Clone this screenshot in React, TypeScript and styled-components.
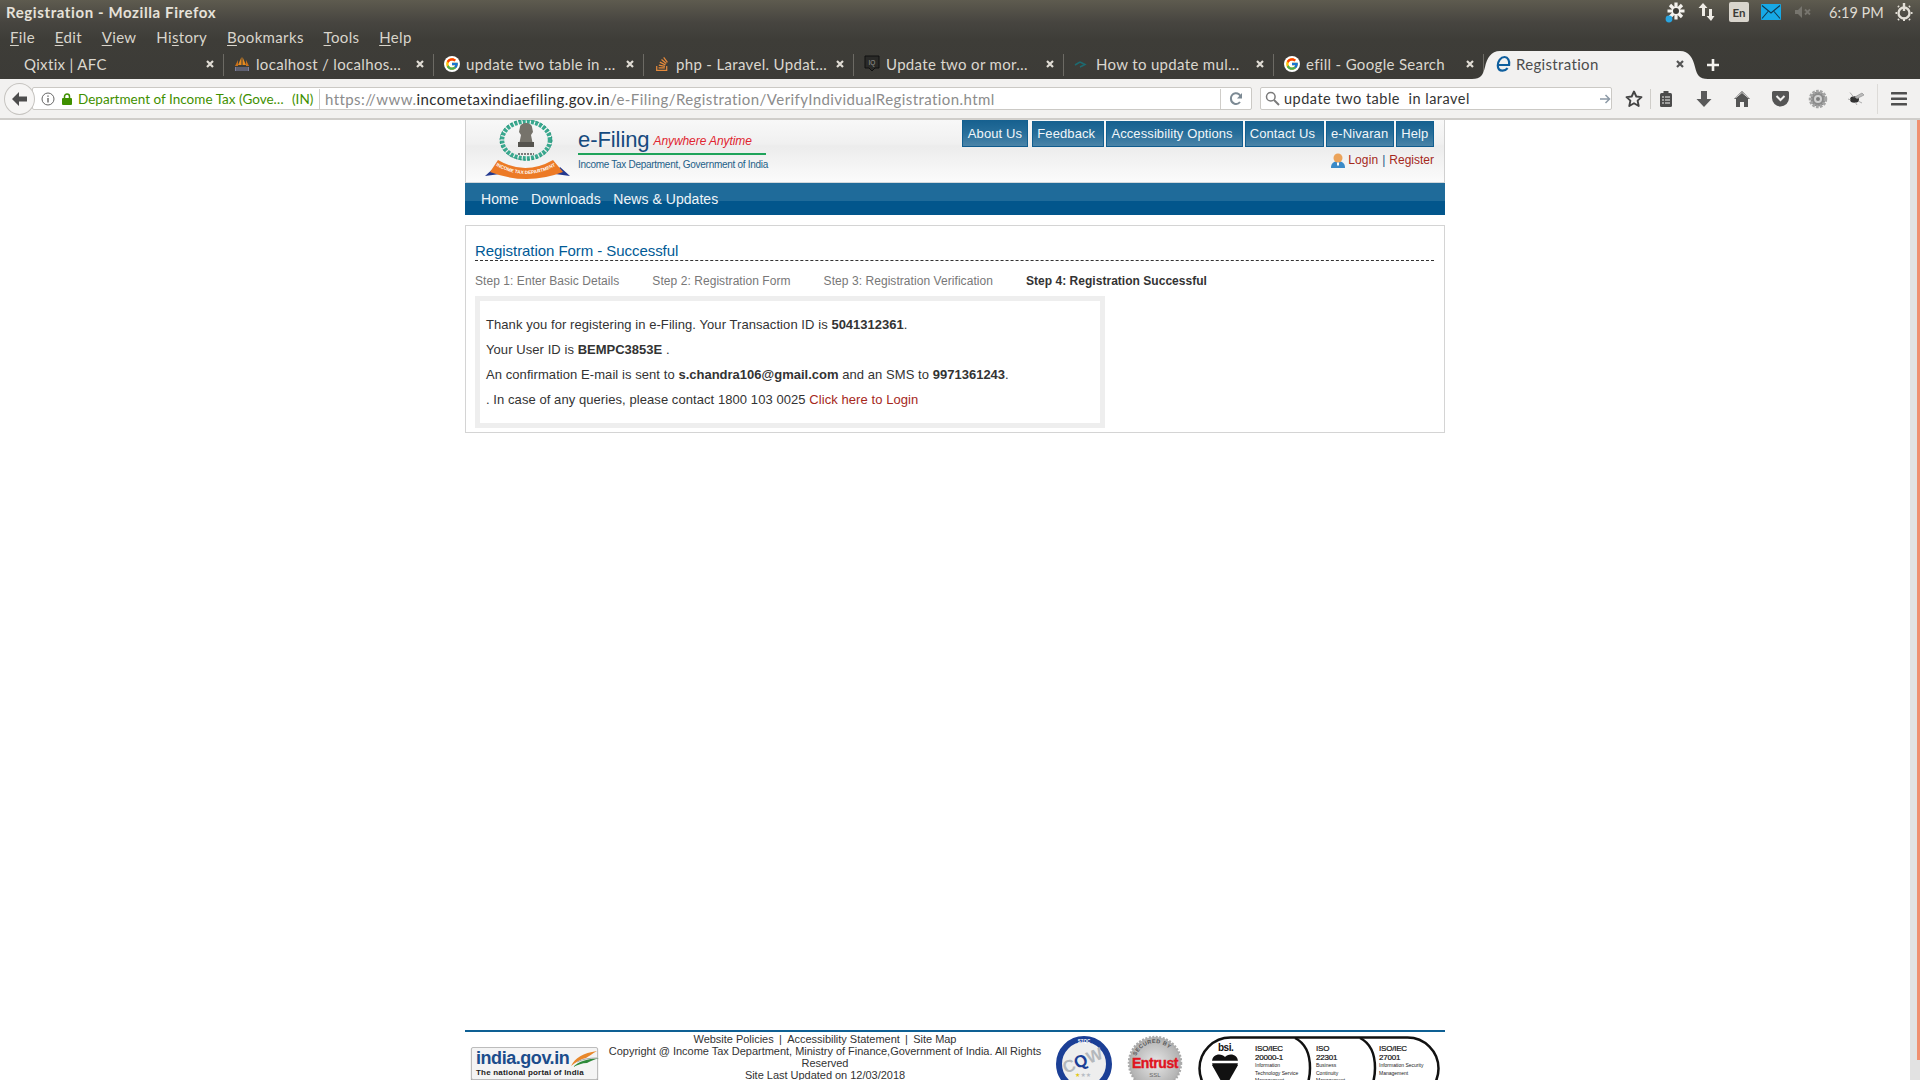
import React from 'react';
import styled, { createGlobalStyle } from 'styled-components';
import { FcGoogle } from 'react-icons/fc';
import { FaStackOverflow } from 'react-icons/fa';

const Global = createGlobalStyle`
  html, body { margin: 0; padding: 0; background: #fff; overflow: hidden; }
  * { box-sizing: border-box; }
`;

const UI = `"Lato", "Noto Sans", sans-serif`;
const WEB = `"Liberation Sans", Arial, sans-serif`;

const Screen = styled.div`
  width: 1920px; height: 1080px; overflow: hidden; display: flex; flex-direction: column;
  font-family: ${UI}; background: #fff;
`;
const TopChrome = styled.div`
  background: linear-gradient(180deg, #5e5b4f 0, #474540 22px, #3e3d38 40px, #3c3b37 100%);
  height: 79px; display: flex; flex-direction: column;
`;
const TitleBar = styled.div`
  height: 24px; display: flex; align-items: center; justify-content: space-between; padding-left: 6px; color: #e6e2da;
`;
const WindowTitle = styled.div`
  font: 700 15px ${UI}; letter-spacing: 0.6px;
`;
const Tray = styled.div`
  display: flex; align-items: center; padding-right: 1px; height: 24px;
`;
const TraySlot = styled.div<{ $w?: number }>`
  width: ${p => p.$w ?? 32}px; display: flex; justify-content: center; align-items: center; height: 24px;
`;
const Clock = styled.div`
  width: 60px; margin-left: 10px; font: 400 14.5px ${UI}; color: #dfdbd2; white-space: nowrap;
`;
const Lang = styled.div`
  width: 20px; height: 20px; background: #d9d5cd; border-radius: 2px; color: #3c3b37; font: 700 11.5px ${UI};
  display: flex; align-items: center; justify-content: center;
`;
const MenuBar = styled.div`
  height: 26px; display: flex; align-items: center; padding: 0 0 1px 10px; gap: 19.8px; color: #d9d5cc; font: 400 15px ${UI};
`;
const MenuItem = styled.span`
  letter-spacing: 0.35px;
  u { text-underline-offset: 2px; text-decoration-thickness: 1px; }
`;
const TabStrip = styled.div`
  height: 29px; display: flex; align-items: stretch; padding-left: 14px;
`;
const Tab = styled.div<{ $active?: boolean }>`
  width: ${p => (p.$active ? 212 : 210)}px; position: relative; display: flex; align-items: center; padding: 0 ${p => (p.$active ? 11 : 9)}px 1px ${p => (p.$active ? 12 : 10)}px;
  color: ${p => (p.$active ? '#4c4c4c' : '#dbd7cf')}; font: 400 15px ${UI}; white-space: nowrap;
  &::after {
    content: ''; display: ${p => (p.$active ? 'none' : 'block')}; position: absolute; right: 0; top: 4px; bottom: 3px; width: 1px; background: #6c6a64;
  }
`;
const TabShape = styled.svg`
  position: absolute; left: -12px; top: 0; width: 236px; height: 29px; fill: #f2f1f0;
`;
const TabIcon = styled.span<{ $active?: boolean }>`
  width: 16px; height: 16px; margin-right: ${p => (p.$active ? 4 : 6)}px; flex: none; display: flex; align-items: center; justify-content: center; position: relative;
`;
const GoogleDisc = styled(TabIcon)`
  background: #fff; border-radius: 50%;
`;
const TabLabel = styled.span`
  flex: 1; overflow: hidden; position: relative; letter-spacing: 0.33px;
`;
const TabClose = styled.span<{ $dark?: boolean }>`
  width: 10px; height: 10px; flex: none; position: relative; display: flex;
  svg { stroke: ${p => (p.$dark ? '#555' : '#e0dcd4')}; }
`;
const NewTab = styled.div`
  width: 28px; margin-left: 3px; display: flex; align-items: center; justify-content: center; position: relative;
`;
const NavBar = styled.div`
  height: 41px; background: #f2f1f0; border-bottom: 2px solid #cfcdca; display: flex; align-items: center; padding-left: 4px;
`;
const BackCircle = styled.div`
  width: 31px; height: 32px; border-radius: 50%; background: #f6f5f4; border: 1px solid #c6c4c0; display: flex; align-items: center; justify-content: center; position: relative; z-index: 1; flex: none;
`;
const UrlBar = styled.div`
  width: 1220px; margin-left: -3px; height: 23px; background: #fff; border: 1px solid #cbc9c5; border-radius: 2px;
  display: flex; align-items: center; padding-left: 8px; font: 400 15px ${UI}; white-space: nowrap;
`;
const Info = styled.svg`
  flex: none;
`;
const Lock = styled.svg`
  flex: none; margin-left: 7px;
`;
const Secure = styled.span`
  color: #3f9000; margin-left: 6px; font-size: 13.5px; width: 214px; letter-spacing: 0.02px;
`;
const SecureCC = styled.span`
  color: #3f9000; font-size: 13.5px; width: 27px;
`;
const Divider = styled.span`
  width: 1px; height: 20px; background: #cfcdc9; flex: none;
`;
const UrlText = styled.span`
  color: #8c8c8c; margin-left: 5px; width: 895px; letter-spacing: 0.42px;
  b { font-weight: 400; color: #2d2d2d; }
`;
const Reload = styled.span`
  margin-left: 8px; display: flex;
`;
const SearchBar = styled.div`
  width: 352px; margin-left: 8px; height: 23px; background: #fff; border: 1px solid #cbc9c5; border-radius: 2px;
  display: flex; align-items: center; padding-left: 4px; font: 400 14.5px ${UI}; color: #333; justify-content: space-between; letter-spacing: 0.5px;
`;
const SearchLeft = styled.span`
  display: flex; align-items: center; gap: 4px; white-space: pre;
`;
const ToolIcons = styled.div`
  display: flex; align-items: center; margin-left: 5px;
`;
const ToolSlot = styled.div<{ $w?: number; $gap?: number }>`
  width: ${p => p.$w ?? 38}px; height: 26px; margin-left: ${p => p.$gap ?? 0}px; display: flex; align-items: center; justify-content: center; flex: none;
`;
const ToolDivider = styled.span`
  width: 1px; height: 30px; background: #dddbd8; margin-left: 2px; flex: none;
`;
const Page = styled.div`
  flex: 1; min-height: 0; display: flex; font-family: ${WEB};
`;
const PageBody = styled.div`
  flex: 1; min-width: 0; display: flex; justify-content: center;
`;
const Scrollbar = styled.div`
  width: 10px; flex: none; background: #e2e2e2; display: flex; justify-content: flex-end;
`;
const ScrollThumb = styled.div`
  width: 3px; height: 940px; background: #f09070;
`;
const Wrapper = styled.div`
  width: 980px; display: flex; flex-direction: column;
`;
const Header = styled.div`
  height: 63px; border-left: 1px solid #d0d0d0; border-right: 1px solid #d0d0d0; display: flex; justify-content: space-between;
  background: linear-gradient(180deg, #f8f8f8 0, #f0f0f0 24px, #ececec 26px, #fbfbfb 100%);
  border-bottom: 1px solid #d2d8dc;
`;
const Brand = styled.div`
  display: flex; padding-left: 19px;
`;
const Wordmark = styled.div`
  margin-left: 8px; display: flex; flex-direction: column; width: 192px; padding-top: 7px;
`;
const BrandTop = styled.div`
  display: flex; align-items: center; height: 26px;
`;
const Efiling = styled.span`
  font: 400 22px ${WEB}; color: #164a7e; letter-spacing: -0.08px;
`;
const Tagline = styled.span`
  font: italic 400 12px ${WEB}; color: #e0242f; margin-left: 4px; padding-top: 2px; letter-spacing: -0.08px;
`;
const GreenRule = styled.div`
  height: 2px; background: #1fa35a; width: 188px;
`;
const Dept = styled.div`
  font: 400 10px ${WEB}; color: #1e5f88; margin-top: 4px; letter-spacing: -0.29px; white-space: nowrap;
`;
const HeaderRight = styled.div`
  display: flex; flex-direction: column; align-items: flex-end; padding-right: 10px;
`;
const TopLinks = styled.div`
  display: flex; gap: 2px;
`;
const TopLink = styled.a<{ $first?: boolean; $pr?: number }>`
  height: ${p => (p.$first ? 27 : 26)}px; margin-top: ${p => (p.$first ? 0 : 1)}px; margin-right: ${p => (p.$first ? 2 : 0)}px;
  padding: 0 ${p => p.$pr ?? 9}px 0 ${p => (p.$first ? 5 : 4)}px; display: flex; align-items: center; color: #f2f6f9; font: 400 13px ${WEB}; white-space: nowrap; letter-spacing: 0.1px;
  background: linear-gradient(180deg, #16608f 0, #276e9a 50%, #4b84a8 100%);
  border-bottom: 1px solid #0f5b8e; border-left: 1px solid #115f90; border-right: 1px solid #115f90;
`;
const LoginRow = styled.div`
  display: flex; align-items: center; margin-top: 5px; font: 400 12px ${WEB}; color: #1d5b85; height: 16px;
`;
const RedLink = styled.a`
  color: #a5281b;
`;
const LoginLink = styled(RedLink)`
  letter-spacing: 0.1px;
`;
const Sep = styled.span`
  margin: 0 4px; color: #1d5b85;
`;
const UserIcon = styled.span`
  display: flex; margin-right: 3px;
`;
const NavStrip = styled.div`
  height: 32px; background: linear-gradient(180deg, #1f6b9a 0, #1f6b9a 55%, #02568c 55%, #02568c 100%);
  display: flex; align-items: center; padding-left: 16px; gap: 12.5px; padding-bottom: 1px;
`;
const NavLink = styled.a`
  font: 400 14px ${WEB}; color: #eef4f8; letter-spacing: 0.05px;
`;
const Panel = styled.div`
  margin-top: 10px; height: 208px; border: 1px solid #d4d4d4; padding: 16px 9px 0 9px; display: flex; flex-direction: column;
`;
const PanelTitle = styled.h2`
  margin: 0; font: 400 15px/18px ${WEB}; color: #005a96; height: 19px; border-bottom: 1px dashed #333;
  margin-right: 1px; letter-spacing: -0.06px; white-space: nowrap;
`;
const Steps = styled.div`
  display: flex; gap: 33px; margin-top: 11px; height: 18px; align-items: center;
`;
const Step = styled.span<{ $active?: boolean }>`
  font: ${p => (p.$active ? 700 : 400)} 12px ${WEB}; color: ${p => (p.$active ? '#333' : '#777')}; letter-spacing: ${p => (p.$active ? 0.03 : 0.06)}px;
`;
const MessageBox = styled.div`
  margin-top: 6px; width: 630px; height: 132px; border: 5px solid #eee; padding: 11px 6px 0 6px;
`;
const Message = styled.p`
  margin: 0; font: 400 13px/25px ${WEB}; color: #333; height: 25px; white-space: nowrap; letter-spacing: 0.07px;
  b { font-weight: 700; letter-spacing: 0; }
`;
const Footer = styled.div`
  margin-top: auto; height: 50px; flex: none; border-top: 2px solid #0e6094; display: flex; overflow: hidden;
`;
const IndiaBadge = styled.div`
  margin: 15px 0 0 6px; width: 127px; height: 33px; flex: none; border: 1px solid #bcbcbc; border-radius: 2px; background: #f4f4f4;
  box-shadow: 0 1px 1px #888; padding: 1px 0 0 4px;
`;
const IndiaName = styled.div`
  font: 700 18px/19px ${WEB}; color: #1b4d8c; letter-spacing: -0.45px; display: flex; align-items: center; white-space: nowrap;
`;
const IndiaSub = styled.div`
  font: 700 8px/10px ${WEB}; color: #222; letter-spacing: 0.2px; white-space: nowrap;
`;
const FooterText = styled.div`
  width: 442px; margin-left: 6px; padding-top: 1px; text-align: center; font: 400 11px/12px ${WEB}; color: #333; letter-spacing: -0.02px;
`;
const FooterSep = styled.span`
  margin: 0 5.3px;
`;
const FooterLogos = styled.div`
  display: flex; align-items: flex-start; margin-left: 10px;
`;
const CqwLogo = styled.svg`
  width: 56px; height: 56px; margin-top: 4px; flex: none;
`;
const EntrustLogo = styled.svg`
  width: 56px; height: 56px; margin-top: 3px; margin-left: 15px; flex: none;
`;
const IsoLogo = styled.svg`
  width: 242px; height: 64px; margin-top: 4px; margin-left: 15px; flex: none;
`;
const EmblemSvg = styled.svg`
  width: 85px; height: 60px; flex: none; display: block;
`;
const SwooshSvg = styled.svg`
  width: 32px; height: 18px; margin-left: 0; flex: none;
`;

const Close = ({ dark }: { dark?: boolean }) => (
  <TabClose $dark={dark}>
    <svg width="10" height="10" viewBox="0 0 10 10" fill="none" strokeWidth="2.2"><path d="M2 2l6 6M8 2l-6 6" /></svg>
  </TabClose>
);

const SailIcon = () => (
  <svg width="16" height="16" viewBox="0 0 16 16">
    <path d="M7.5 1L4 9h3.5zM8.5 1L12 9H8.5z" fill="#e68a1f" />
    <path d="M4 4L1 10h3zM12 4l3 6h-3z" fill="#c96f1a" />
    <rect x="1" y="11" width="14" height="4" fill="#7c7f9c" />
    <path d="M2 12h12M2 14h12" stroke="#333" strokeWidth=".8" />
  </svg>
);
const IqIcon = () => (
  <svg width="16" height="18" viewBox="0 0 16 18">
    <path d="M1 1h14v12h-4l-3 3-3-3H1z" fill="#2a2a28" stroke="#111" />
    <text x="8" y="10" fontSize="6.5" textAnchor="middle" fill="#9a9a94" fontFamily="Liberation Sans">IQ</text>
  </svg>
);
const ArrowIcon = () => (
  <svg width="16" height="16" viewBox="0 0 16 16"><path d="M1 9l5-3M6 6l5 2.5-5 2.5" stroke="#1d6a70" strokeWidth="1.5" fill="none" /></svg>
);
const EIcon = () => (
  <svg width="16" height="18" viewBox="0 0 16 18">
    <path d="M2.5 10h10.6c.7-4.200-1.200-8-4.500-8C4.700 2 1.800 6 1.800 10.500c0 3.300 1.900 5.200 4.800 5.200 2.100 0 3.800-.9 5-2.500" stroke="#0f5f9e" strokeWidth="2.200" fill="none" />
  </svg>
);

const tabs: { label: string; icon?: React.ReactNode; google?: boolean }[] = [
  { label: 'Qixtix | AFC' },
  { label: 'localhost / localhos…', icon: <SailIcon /> },
  { label: 'update two table in …', google: true },
  { label: 'php - Laravel. Updat…', icon: <FaStackOverflow size={16} color="#e58a3c" /> },
  { label: 'Update two or mor…', icon: <IqIcon /> },
  { label: 'How to update mul…', icon: <ArrowIcon /> },
  { label: 'efill - Google Search', google: true },
];

const menus: [string, string, string][] = [
  ['', 'F', 'ile'], ['', 'E', 'dit'], ['', 'V', 'iew'], ['Hi', 's', 'tory'], ['', 'B', 'ookmarks'], ['', 'T', 'ools'], ['', 'H', 'elp'],
];

const topLinks: { label: string; pr: number; first?: boolean }[] = [
  { label: 'About Us', pr: 5.2, first: true },
  { label: 'Feedback', pr: 8.2 },
  { label: 'Accessibility Options', pr: 9 },
  { label: 'Contact Us', pr: 8 },
  { label: 'e-Nivaran', pr: 5 },
  { label: 'Help', pr: 4.6 },
];

const Emblem = () => (
  <EmblemSvg viewBox="0 0 85 60">
    <defs>
      <path id="ribbonArc" d="M10 45 Q41 63 72 45" fill="none" />
    </defs>
    <ellipse cx="41" cy="20" rx="24" ry="18.500" fill="none" stroke="#39a88e" strokeWidth="4.500" strokeDasharray="3 1.200" />
    <ellipse cx="41" cy="20" rx="26" ry="20" fill="none" stroke="#1f8a72" strokeWidth=".7" strokeDasharray="2 2" />
    <path d="M35 7c0-2 3-4 6-4s6 2 6 4l1 5-2 3 2 10H34l2-10-2-3z" fill="#76736b" />
    <rect x="33" y="22" width="16" height="5" fill="#55534e" />
    <path d="M33 34h16" stroke="#555" strokeWidth="1.500" strokeDasharray="2 1" />
    <path d="M0 56 L10 47 L15 54z M85 56 L75 47 L70 54z" fill="#23398f" />
    <path d="M13 40 Q40 56 68 40 L78 52 Q42 66 5 52 Z" fill="#ec7a26" />
    <text fontSize="4.700" fontWeight="700" fill="#fff" fontFamily="Liberation Sans">
      <textPath href="#ribbonArc" startOffset="1">INCOME TAX DEPARTMENT</textPath>
    </text>
  </EmblemSvg>
);

export default function App() {
  return (
    <Screen>
      <Global />
      <TopChrome>
        <TitleBar>
          <WindowTitle>Registration - Mozilla Firefox</WindowTitle>
          <Tray>
            <TraySlot>
              <svg width="22" height="22" viewBox="0 0 22 22">
                <path d="M12 1.500v17M3.500 10h17M6 4l12 12M18 4L6 16" stroke="#f4f2ee" strokeWidth="3.200" />
                <circle cx="12" cy="10" r="3" fill="#3e3d38" />
                <circle cx="5" cy="18" r="3.400" fill="#2aa5e0" />
              </svg>
            </TraySlot>
            <TraySlot>
              <svg width="18" height="20" viewBox="0 0 18 20" fill="#efece6"><path d="M5 1l4.500 5H7v8H4V6H.5zM13 19l-4.500-5H11V7h3v7h2.500z" /></svg>
            </TraySlot>
            <TraySlot><Lang>En</Lang></TraySlot>
            <TraySlot>
              <svg width="20" height="16" viewBox="0 0 20 16"><rect width="20" height="16" rx="1" fill="#17a9e6" /><path d="M1 1.500l9 7.500 9-7.500M1 14.500l6-7M19 14.500l-6-7" stroke="#12384f" strokeWidth="1.100" fill="none" /></svg>
            </TraySlot>
            <TraySlot>
              <svg width="18" height="14" viewBox="0 0 18 14"><path d="M1 5h3l4-4v12l-4-4H1z" fill="#77756e" /><path d="M11 4.500l5 5M16 4.500l-5 5" stroke="#77756e" strokeWidth="1.800" /></svg>
            </TraySlot>
            <Clock>6:19 PM</Clock>
            <TraySlot $w={30}>
              <svg width="18" height="20" viewBox="0 0 18 20" fill="none" stroke="#e2ded6" strokeWidth="2.400"><path d="M9 1v8" /><circle cx="9" cy="11" r="5.500" /><path d="M9 15.500V19M2 11H.5M16 11h1.500M4 5L3 4M14 5l1-1M4 17l-1 1M14 17l1 1" strokeWidth="2" /></svg>
            </TraySlot>
          </Tray>
        </TitleBar>
        <MenuBar>
          {menus.map(([a, b, c]) => (
            <MenuItem key={a + b + c}>{a}<u>{b}</u>{c}</MenuItem>
          ))}
        </MenuBar>
        <TabStrip>
          {tabs.map(t => (
            <Tab key={t.label}>
              {t.google ? <GoogleDisc><FcGoogle size={14} /></GoogleDisc> : t.icon ? <TabIcon>{t.icon}</TabIcon> : null}
              <TabLabel>{t.label}</TabLabel>
              <Close />
            </Tab>
          ))}
          <Tab $active>
            <TabShape viewBox="0 0 236 29">
              <path d="M0 29c9 0 11-4 13-12 2-9 6-16 15-16h180c9 0 13 7 15 16 2 8 4 12 13 12z" />
            </TabShape>
            <TabIcon $active><EIcon /></TabIcon>
            <TabLabel>Registration</TabLabel>
            <Close dark />
          </Tab>
          <NewTab>
            <svg width="14" height="14" viewBox="0 0 14 14"><path d="M7 1v12M1 7h12" stroke="#f4f2ee" strokeWidth="2.600" /></svg>
          </NewTab>
        </TabStrip>
      </TopChrome>
      <NavBar>
        <BackCircle>
          <svg width="16" height="14" viewBox="0 0 16 14"><path d="M7 0L0 7l7 7V9.500h8v-5H7z" fill="#4d4d4d" /></svg>
        </BackCircle>
        <UrlBar>
          <Info width="14" height="14" viewBox="0 0 14 14" fill="none"><circle cx="7" cy="7" r="6" stroke="#666" /><path d="M7 6v4.500M7 3.500v1.300" stroke="#666" strokeWidth="1.400" /></Info>
          <Lock width="10" height="12" viewBox="0 0 10 12"><path d="M2.500 5V3.500a2.500 2.500 0 015 0V5" fill="none" stroke="#3f9000" strokeWidth="1.500" /><rect y="5" width="10" height="7" rx="1" fill="#3f9000" /></Lock>
          <Secure>Department of Income Tax (Gove…</Secure>
          <SecureCC>(IN)</SecureCC>
          <Divider />
          <UrlText>https://www.<b>incometaxindiaefiling.gov.in</b>/e-Filing/Registration/VerifyIndividualRegistration.html</UrlText>
          <Divider />
          <Reload>
            <svg width="14" height="14" viewBox="0 0 14 14" fill="none"><path d="M12 5.500A5 5 0 102 7a5 5 0 009 3" stroke="#7c8a94" strokeWidth="2" /><path d="M13 1v5.500H8z" fill="#7c8a94" /></svg>
          </Reload>
        </UrlBar>
        <SearchBar>
          <SearchLeft>
            <svg width="15" height="15" viewBox="0 0 15 15" fill="none" stroke="#7a7a7a"><circle cx="5.800" cy="5.800" r="4.300" strokeWidth="1.500" /><path d="M9 9l5 5" strokeWidth="2" /></svg>
            update two table  in laravel
          </SearchLeft>
          <svg width="12" height="12" viewBox="0 0 12 12" fill="none" stroke="#8c99a6" strokeWidth="1.500"><path d="M1 6h9M6.500 2l4 4-4 4" /></svg>
        </SearchBar>
        <ToolIcons>
          <ToolSlot $w={33}>
            <svg width="18" height="18" viewBox="0 0 18 18"><path d="M9 1.500l2.300 5 5.200.6-3.900 3.500 1.100 5.400L9 13.300 4.300 16l1.100-5.400L1.500 7.100l5.200-.6z" fill="none" stroke="#444" strokeWidth="1.900" strokeLinejoin="round" /></svg>
          </ToolSlot>
          <Divider />
          <ToolSlot $w={30}>
            <svg width="14" height="18" viewBox="0 0 14 18"><rect x="1" y="3" width="12" height="14" rx="1.500" fill="#4c4c4c" /><rect x="4.500" y="1" width="5" height="3.500" fill="#4c4c4c" /><path d="M3 7h2M6 7h5M3 10h2M6 10h5M3 13h2M6 13h5" stroke="#f2f1f0" strokeWidth="1.200" /></svg>
          </ToolSlot>
          <ToolSlot $gap={4}>
            <svg width="16" height="18" viewBox="0 0 16 18"><path d="M5 1h6v8h4.500L8 17 .5 9H5z" fill="#5a5a5a" /></svg>
          </ToolSlot>
          <ToolSlot>
            <svg width="18" height="18" viewBox="0 0 18 18"><path d="M9 1l8 8h-2v8h-4v-5H7v5H3V9H1z" fill="#555" /><path d="M2.500 8L9 2.500 15.500 8" stroke="#f2f1f0" strokeWidth=".8" fill="none" /></svg>
          </ToolSlot>
          <ToolSlot>
            <svg width="17" height="16" viewBox="0 0 17 16"><path d="M1.500 0h14A1.500 1.500 0 0117 1.500V7a8.500 8.500 0 01-17 0V1.500A1.500 1.500 0 011.500 0z" fill="#555" /><path d="M4.500 5l4 4 4-4" stroke="#f2f1f0" strokeWidth="2" fill="none" /></svg>
          </ToolSlot>
          <ToolSlot>
            <svg width="20" height="20" viewBox="0 0 20 20"><circle cx="10" cy="10" r="7.500" fill="#8a8a8a" stroke="#a4a4a4" strokeWidth="3.500" strokeDasharray="2.500 1.200" /><circle cx="10" cy="10" r="4" fill="#d0d0d0" /><circle cx="10" cy="10" r="2" fill="#7c7c7c" /></svg>
          </ToolSlot>
          <ToolSlot>
            <svg width="18" height="15" viewBox="0 0 18 15"><ellipse cx="7.500" cy="8.500" rx="4.500" ry="3.200" fill="#333" /><path d="M8 6l7-4 2 2-7 3.500zM7 6.500L3 1.500M4 9L1 8M8 11l2 3M11 10l4 2" stroke="#999" fill="#bbb" strokeWidth=".8" /></svg>
          </ToolSlot>
          <ToolDivider />
          <ToolSlot $w={42}>
            <svg width="16" height="14" viewBox="0 0 16 14" fill="#4f4f4f"><rect width="16" height="2.600" rx=".5" /><rect y="5.500" width="16" height="2.600" rx=".5" /><rect y="11" width="16" height="2.600" rx=".5" /></svg>
          </ToolSlot>
        </ToolIcons>
      </NavBar>
      <Page>
        <PageBody>
          <Wrapper>
            <Header>
              <Brand>
                <Emblem />
                <Wordmark>
                  <BrandTop>
                    <Efiling>e-Filing</Efiling>
                    <Tagline>Anywhere Anytime</Tagline>
                  </BrandTop>
                  <GreenRule />
                  <Dept>Income Tax Department, Government of India</Dept>
                </Wordmark>
              </Brand>
              <HeaderRight>
                <TopLinks>
                  {topLinks.map(l => (
                    <TopLink key={l.label} $first={l.first} $pr={l.pr}>{l.label}</TopLink>
                  ))}
                </TopLinks>
                <LoginRow>
                  <UserIcon>
                    <svg width="14" height="15" viewBox="0 0 14 15"><path d="M0 15c0-4 2-6 4.500-6.500h5C12 9 14 11 14 15z" fill="#3a8ac8" /><circle cx="7" cy="5" r="4.500" fill="#eba35a" /><path d="M6 9.500h2v3H6z" fill="#fff" /></svg>
                  </UserIcon>
                  <LoginLink>Login</LoginLink>
                  <Sep>|</Sep>
                  <RedLink>Register</RedLink>
                </LoginRow>
              </HeaderRight>
            </Header>
            <NavStrip>
              <NavLink>Home</NavLink>
              <NavLink>Downloads</NavLink>
              <NavLink>News &amp; Updates</NavLink>
            </NavStrip>
            <Panel>
              <PanelTitle>Registration Form - Successful</PanelTitle>
              <Steps>
                <Step>Step 1: Enter Basic Details</Step>
                <Step>Step 2: Registration Form</Step>
                <Step>Step 3: Registration Verification</Step>
                <Step $active>Step 4: Registration Successful</Step>
              </Steps>
              <MessageBox>
                <Message>Thank you for registering in e-Filing. Your Transaction ID is <b>5041312361</b>.</Message>
                <Message>Your User ID is <b>BEMPC3853E</b> .</Message>
                <Message>An confirmation E-mail is sent to <b>s.chandra106@gmail.com</b> and an SMS to <b>9971361243</b>.</Message>
                <Message>. In case of any queries, please contact 1800 103 0025 <RedLink>Click here to Login</RedLink></Message>
              </MessageBox>
            </Panel>
            <Footer>
              <IndiaBadge>
                <IndiaName>
                  india.gov.in
                  <SwooshSvg viewBox="0 0 32 18">
                    <path d="M2 16C6 8 14 3 28 1c-5 3-8 5-11 7-5 1-10 4-15 8z" fill="#e8872a" />
                    <path d="M4 17c6-6 14-8 26-9-5 2-9 3-12 5-5 0-9 2-14 4z" fill="#2f8a3a" />
                    <path d="M8 12c6-3 12-4 20-4" stroke="#aaa" fill="none" />
                  </SwooshSvg>
                </IndiaName>
                <IndiaSub>The national portal of India</IndiaSub>
              </IndiaBadge>
              <FooterText>
                Website Policies<FooterSep>|</FooterSep>Accessibility Statement<FooterSep>|</FooterSep>Site Map<br />
                Copyright @ Income Tax Department, Ministry of Finance,Government of India. All Rights Reserved<br />
                Site Last Updated on 12/03/2018
              </FooterText>
              <FooterLogos>
                <CqwLogo viewBox="0 0 56 56">
                  <circle cx="28" cy="28" r="25" fill="#eeeeee" stroke="#1b3f96" strokeWidth="6" />
                  <text x="28" y="30" fontSize="17" textAnchor="middle" fontWeight="700" fill="#b4b8bc" fontFamily="Liberation Sans" transform="rotate(-22 28 28)">C<tspan fill="#1b3f96">Q</tspan>W</text>
                  <text x="28" y="6.500" fontSize="4.500" textAnchor="middle" fontWeight="700" fill="#fff" fontFamily="Liberation Sans">STQC</text>
                  <text x="19" y="41" fontSize="6" fill="#e3c81a" fontFamily="DejaVu Sans">★<tspan fill="#b7bcc4">★★</tspan></text>
                </CqwLogo>
                <EntrustLogo viewBox="0 0 56 56">
                  <defs>
                    <radialGradient id="seal"><stop offset="0" stopColor="#e8e8e8" /><stop offset="1" stopColor="#b0b0b0" /></radialGradient>
                    <path id="sealArc" d="M8 28a20 20 0 0140 0" fill="none" />
                  </defs>
                  <circle cx="28" cy="28" r="26" fill="url(#seal)" stroke="#aaa" strokeWidth="2.500" strokeDasharray="2 1.500" />
                  <text fontSize="5.500" fill="#555" fontWeight="700" fontFamily="Liberation Sans" letterSpacing=".4"><textPath href="#sealArc" startOffset="7">SECURED BY</textPath></text>
                  <text x="28" y="33" fontSize="14" textAnchor="middle" fontWeight="700" fill="#e0151f" stroke="#e0151f" strokeWidth=".4" fontFamily="Liberation Sans" letterSpacing="-.4">Entrust</text>
                  <text x="28" y="42" fontSize="6" textAnchor="middle" fill="#666" fontFamily="Liberation Sans">SSL</text>
                </EntrustLogo>
                <IsoLogo viewBox="0 0 242 64">
                  <rect x="1.500" y="1.500" width="239" height="62" rx="31" fill="#fff" stroke="#111" strokeWidth="2.500" />
                  <path d="M97 2c10 5 15 16 15 30s-5 25-15 30M162 2c10 5 15 16 15 30s-5 25-15 30" fill="none" stroke="#111" strokeWidth="2.500" />
                  <text x="20" y="15" fontSize="10" fontWeight="700" fill="#111" fontFamily="Liberation Sans" letterSpacing="-.5">bsi.</text>
                  <path d="M27 21c-3-4-13-4-13 5 0 7 8 11 13 16 5-5 13-9 13-16 0-9-10-9-13-5z" fill="#111" />
                  <path d="M13 25.500h28M13 26.500h28" stroke="#fff" strokeWidth="1.600" />
                  <path d="M14 29h26L27 52z" fill="#111" />
                  <g fontSize="8" fontWeight="400" fill="#111" stroke="#111" strokeWidth=".2" fontFamily="Liberation Sans" letterSpacing="-.2">
                    <text x="57" y="15">ISO/IEC</text>
                    <text x="57" y="24">20000-1</text>
                    <text x="118" y="15">ISO</text>
                    <text x="118" y="24">22301</text>
                    <text x="181" y="15">ISO/IEC</text>
                    <text x="181" y="24">27001</text>
                  </g>
                  <g fontSize="5" fill="#222" fontFamily="Liberation Sans">
                    <text x="57" y="31">Information</text>
                    <text x="57" y="39">Technology Service</text>
                    <text x="57" y="46">Management</text>
                    <text x="118" y="31">Business</text>
                    <text x="118" y="39">Continuity</text>
                    <text x="118" y="46">Management</text>
                    <text x="181" y="31">Information Security</text>
                    <text x="181" y="39">Management</text>
                  </g>
                </IsoLogo>
              </FooterLogos>
            </Footer>
          </Wrapper>
        </PageBody>
        <Scrollbar><ScrollThumb /></Scrollbar>
      </Page>
    </Screen>
  );
}
